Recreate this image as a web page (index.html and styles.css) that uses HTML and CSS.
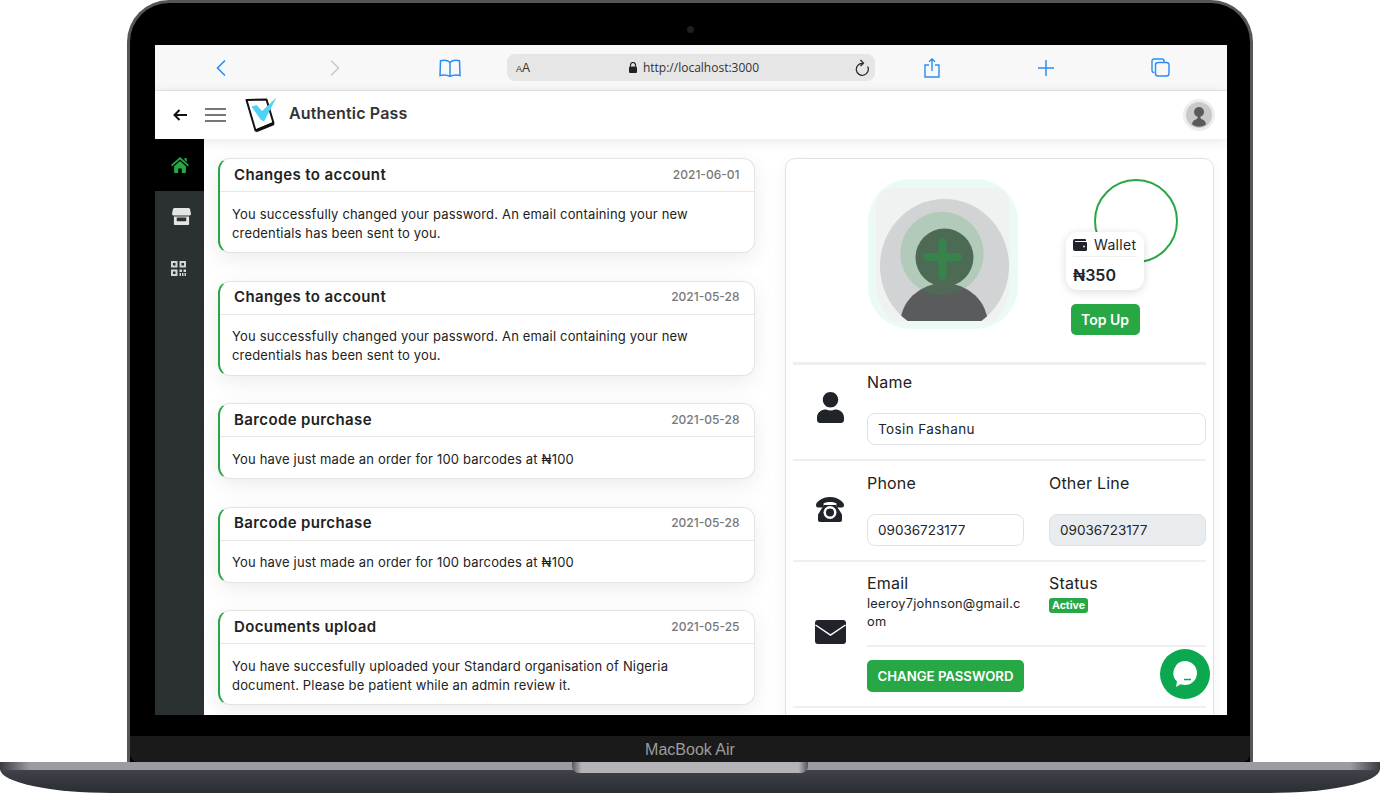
FILE: index.html
```html
<!DOCTYPE html>
<html lang="en">
<head>
    <meta charset="UTF-8">
    <meta name="viewport" content="width=device-width, initial-scale=1.0">
    <title>Authentic Pass</title>
    <link rel="stylesheet" href="styles.css">
</head>
<body>
    <div class="laptop">
        <div class="lid">
            <div class="bezel-top"><span class="camera"></span></div>
            <div class="screen">
                <!-- browser bar -->
                <div class="browser-bar">
                    <div class="bar-slot">
                        <svg width="12" height="18" viewBox="0 0 12 18" fill="none" stroke="#2b8cf6" stroke-width="1.6"><path d="M10 1.5 2.5 9l7.5 7.5"/></svg>
                    </div>
                    <div class="bar-slot">
                        <svg width="12" height="18" viewBox="0 0 12 18" fill="none" stroke="#c9c9c9" stroke-width="1.6"><path d="M2 1.5 9.5 9 2 16.500"/></svg>
                    </div>
                    <div class="bar-slot">
                        <svg width="22" height="18" viewBox="0 0 22 18" fill="none" stroke="#2b8cf6" stroke-width="1.5"><path d="M11 3.500C9 1.500 5 1 1.500 1.800L1 16.500c3.500-.8 7.500-.5 10 1 2.500-1.500 6.500-1.800 10-1l-.5-14.700C17 1 13 1.500 11 3.500zm0 0v14"/></svg>
                    </div>
                    <div class="url-bar">
                        <span class="url-aa"><small>A</small>A</span>
                        <span class="url-text">
                            <svg width="8" height="11" viewBox="0 0 8 11"><path d="M1.500 4.500V3a2.500 2.500 0 0 1 5 0v1.500" fill="none" stroke="#222" stroke-width="1.200"/><rect y="4.500" width="8" height="6.500" rx="1" fill="#222"/></svg>
                            http://localhost:3000
                        </span>
                        <svg class="url-reload" width="14" height="18" viewBox="0 0 14 18" fill="none" stroke="#222" stroke-width="1.200"><path d="M7.500 4.300A6 6 0 1 0 12.600 7.500"/><path d="M5.500 1l3 3.200-3 2.800"/></svg>
                    </div>
                    <div class="bar-slot">
                        <svg width="16" height="20" viewBox="0 0 16 20" fill="none" stroke="#2b8cf6" stroke-width="1.400"><path d="M5 7H1v12h14V7h-4M8 13V1M5 3.800 8 1l3 2.800"/></svg>
                    </div>
                    <div class="bar-slot">
                        <svg width="16" height="16" viewBox="0 0 16 16" fill="none" stroke="#2b8cf6" stroke-width="1.500"><path d="M8 0v16M0 8h16"/></svg>
                    </div>
                    <div class="bar-slot">
                        <svg width="19" height="19" viewBox="0 0 19 19" fill="none" stroke="#2b8cf6" stroke-width="1.400"><path d="M3.500 14.500H3a2 2 0 0 1-2-2V3a2 2 0 0 1 2-2h8a2 2 0 0 1 2 2v1"/><rect x="4.500" y="4.500" width="13.500" height="13.500" rx="2.500"/></svg>
                    </div>
                </div>

                <!-- app header -->
                <header class="app-header">
                    <svg class="back-arrow" width="14" height="12" viewBox="0 0 14 12" fill="none" stroke="#111" stroke-width="2"><path d="M14 6H2M6.500 1 1.500 6l5 5"/></svg>
                    <span class="hamburger"><i></i><i></i><i></i></span>
                    <svg class="logo" width="33" height="36" viewBox="0 0 33 36"><path d="M1.500 3 21.500 2.500 28.500 26 10.500 33.500z" fill="#fff" stroke="#111" stroke-width="2" stroke-linejoin="round"/><path d="M11 33.800 28.800 26.500" stroke="#111" stroke-width="3"/><path d="M6.500 9.500 11.500 8 17 14 31.500 .5 19 24.500 15.500 22.500z" fill="#4fd2f6"/></svg>
                    <span class="app-title">Authentic Pass</span>
                    <span class="user-chip">
                        <svg width="26" height="26" viewBox="0 0 26 26"><circle cx="13" cy="13" r="13" fill="#c9c9c9"/><circle cx="13" cy="10" r="5" fill="#5a5a5a"/><path d="M12 14h2l1 3c3 .8 4.500 2 5 5.500a13 13 0 0 1-14 0c.5-3.500 2-4.700 5-5.500z" fill="#5a5a5a"/></svg>
                    </span>
                </header>

                <div class="app-body">
                    <nav class="side-nav">
                        <a class="nav-item active">
                            <svg width="18" height="16" viewBox="0 0 20 18" preserveAspectRatio="none" fill="#28a745"><path d="M10 0 20 9l-1.300 1.400L10 2.700 1.300 10.400 0 9z"/><path d="M15 1h2.500v4.500L15 3.300z"/><path d="M3.500 10.500 10 4.500l6.500 6V18H12v-5H8v5H3.500z"/></svg>
                        </a>
                        <a class="nav-item nav-store">
                            <svg width="19" height="17" viewBox="0 0 20 18" preserveAspectRatio="none" fill="#e4e4e4"><path d="M3 0h14a2 2 0 0 1 2 1.400L20 6a2 2 0 0 1-2 2H2a2 2 0 0 1-2-2l1-4.600A2 2 0 0 1 3 0z"/><path fill-rule="evenodd" d="M2 9h16v8a1 1 0 0 1-1 1H3a1 1 0 0 1-1-1zm3 1v4h10v-4z"/></svg>
                        </a>
                        <a class="nav-item nav-qr">
                            <svg width="15" height="15" viewBox="0 0 15 15" fill="#d4d4d4"><path fill-rule="evenodd" d="M0 0h6.500v6.500H0zm2 2v2.500h2.500V2zM8.500 0H15v6.500H8.500zm2 2v2.500H13V2zM0 8.500h6.500V15H0zm2 2V13h2.500v-2.500z"/><path d="M8.500 8.500H11V11H8.500zM12.500 8.500H15V11h-2.500zM8.500 12H10v3H8.500zM11 12h1.500v3H11zM13.500 12H15v3h-1.500z"/></svg>
                        </a>
                    </nav>

                    <main class="content">
                        <section class="feed">
                            <article class="note-card">
                                <div class="note-head"><h3>Changes to account</h3><time>2021-06-01</time></div>
                                <p>You successfully changed your password. An email containing your new credentials has been sent to you.</p>
                            </article>
                            <article class="note-card">
                                <div class="note-head"><h3>Changes to account</h3><time>2021-05-28</time></div>
                                <p>You successfully changed your password. An email containing your new credentials has been sent to you.</p>
                            </article>
                            <article class="note-card">
                                <div class="note-head"><h3>Barcode purchase</h3><time>2021-05-28</time></div>
                                <p>You have just made an order for 100 barcodes at ₦100</p>
                            </article>
                            <article class="note-card">
                                <div class="note-head"><h3>Barcode purchase</h3><time>2021-05-28</time></div>
                                <p>You have just made an order for 100 barcodes at ₦100</p>
                            </article>
                            <article class="note-card">
                                <div class="note-head"><h3>Documents upload</h3><time>2021-05-25</time></div>
                                <p>You have succesfully uploaded your Standard organisation of Nigeria document. Please be patient while an admin review it.</p>
                            </article>
                        </section>

                        <aside class="profile">
                            <div class="profile-top">
                                <svg class="avatar" width="150" height="150" viewBox="0 0 150 150">
                                    <clipPath id="avatar-clip"><path d="M39.700 142A64.500 67 0 1 1 113.300 142z"/></clipPath>
                                    <rect width="150" height="150" rx="42" fill="#ebfbf4"/>
                                    <path d="M8 26a17 17 0 0 1 17-17h100a17 17 0 0 1 17 17v82c0 12-8 24-14 34H22C16 132 8 120 8 108z" fill="#f0f2f1"/>
                                    <g clip-path="url(#avatar-clip)">
                                        <rect width="150" height="150" fill="#d1d3d5"/>
                                        <ellipse cx="76" cy="146" rx="44" ry="42" fill="#5a5b5d"/>
                                    </g>
                                    <circle cx="74" cy="74.500" r="41.700" fill="#28a745" fill-opacity=".19"/>
                                    <circle cx="76.500" cy="78.500" r="29" fill="#4d6a55"/>
                                    <path d="M74.500 63v34M59 78h31" stroke="#37834b" stroke-width="8" stroke-linecap="round"/>
                                </svg>
                                <div class="wallet-col">
                                    <span class="wallet-ring"></span>
                                    <div class="wallet-card">
                                        <div class="wallet-label">
                                            <svg width="14" height="12" viewBox="0 0 14 12"><path d="M2 0h10a1 1 0 0 1 1 1v1H2.500a.5.500 0 0 0 0 1H13a1 1 0 0 1 1 1v6.500a1.500 1.500 0 0 1-1.500 1.500H2a2 2 0 0 1-2-2V2a2 2 0 0 1 2-2z" fill="#20232a"/><circle cx="11" cy="7.500" r=".9" fill="#fff"/></svg>
                                            Wallet
                                        </div>
                                        <div class="wallet-amount">₦350</div>
                                    </div>
                                    <button class="btn btn-topup">Top Up</button>
                                </div>
                            </div>

                            <div class="profile-row row-name">
                                <div class="row-icon">
                                    <svg width="27" height="31" viewBox="0 0 448 512" preserveAspectRatio="none" fill="#20232a"><path d="M224 256c70.700 0 128-57.300 128-128S294.700 0 224 0 96 57.300 96 128s57.300 128 128 128zm89.600 32h-16.700c-22.200 10.200-46.900 16-72.900 16s-50.600-5.800-72.900-16h-16.700C60.200 288 0 348.200 0 422.400V464c0 26.500 21.500 48 48 48h352c26.500 0 48-21.500 48-48v-41.600c0-74.200-60.200-134.400-134.400-134.400z"/></svg>
                                </div>
                                <div class="row-fields">
                                    <label class="field-label">Name</label>
                                    <input class="field-input field-wide" type="text" value="Tosin Fashanu">
                                </div>
                            </div>

                            <div class="profile-row row-phone">
                                <div class="row-icon">
                                    <svg width="28" height="25" viewBox="0 0 28 25" fill="#20232a"><path d="M0 8c0-3 6-8 14-8s14 5 14 8c0 1.600-.6 2.500-2 2.500h-4c-1.200 0-1.600-.8-1.600-2V6.200C18.500 5.300 16 5 14 5s-4.500.3-6.400 1.200v2.300c0 1.200-.4 2-1.600 2H2c-1.400 0-2-.9-2-2.500z"/><path d="M8 8h12l6 9.500V23a2 2 0 0 1-2 2H4a2 2 0 0 1-2-2v-5.500z"/><circle cx="14" cy="15.500" r="6.500" fill="#fff"/><circle cx="14" cy="15.500" r="4" fill="#20232a"/></svg>
                                </div>
                                <div class="row-fields two-col">
                                    <div>
                                        <label class="field-label">Phone</label>
                                        <input class="field-input" type="text" value="09036723177">
                                    </div>
                                    <div>
                                        <label class="field-label">Other Line</label>
                                        <input class="field-input" type="text" value="09036723177" disabled>
                                    </div>
                                </div>
                            </div>

                            <div class="profile-row row-email">
                                <div class="row-icon">
                                    <svg width="31" height="24" viewBox="0 0 31 24"><rect width="31" height="24" rx="3" fill="#20232a"/><path d="M.5 5 15.500 15 30.500 5" fill="none" stroke="#fff" stroke-width="1.500"/></svg>
                                </div>
                                <div class="row-fields">
                                    <div class="two-col email-top">
                                        <div>
                                            <div class="field-label">Email</div>
                                            <div class="email-text">leeroy7johnson@gmail.com</div>
                                        </div>
                                        <div>
                                            <div class="field-label">Status</div>
                                            <span class="badge">Active</span>
                                        </div>
                                    </div>
                                    <button class="btn btn-password">CHANGE PASSWORD</button>
                                </div>
                            </div>
                        </aside>
                    </main>
                </div>

                <a class="chat-bubble">
                    <svg width="26" height="28" viewBox="0 0 26 28"><path d="M13 1a12 12 0 0 1 0 24c-1.500 0-3-.3-4.300-.8L4 27l1-5.500A12 12 0 0 1 13 1z" fill="#fff"/><path d="M12 19.500h7" stroke="#0ba84f" stroke-width="1.500"/></svg>
                </a>
            </div>
            <div class="bezel-bottom"></div>
            <div class="chin">MacBook Air</div>
        </div>
        <div class="base"><span class="base-notch"></span></div>
    </div>
</body>
</html>
```

FILE: styles.css
```css
* {
    box-sizing: border-box;
}
body {
    margin: 0;
    background-color: #fff;
    font-family: "Inter", "Liberation Sans", sans-serif;
    color: #212529;
    overflow: hidden;
}
.laptop {
    width: 1380px;
    height: 793px;
}

/* laptop frame */
.lid {
    display: flex;
    flex-direction: column;
    width: 1126px;
    height: 762px;
    margin-left: 127px;
    border: 3px solid #55565a;
    border-bottom: 0;
    border-radius: 42px 42px 0 0;
    background-color: #000;
}
.bezel-top {
    display: flex;
    justify-content: center;
    align-items: center;
    height: 42px;
    padding-top: 10px;
}
.camera {
    width: 7px;
    height: 7px;
    border-radius: 50%;
    background-color: #1d1f22;
}
.bezel-bottom {
    height: 21px;
}
.chin {
    height: 26px;
    border-radius: 0 0 8px 8px;
    background-color: #1a1a1a;
    color: #9c9c9c;
    font-family: "Liberation Sans", sans-serif;
    font-size: 16px;
    line-height: 27px;
    text-align: center;
}
.base {
    display: flex;
    justify-content: center;
    height: 31px;
    border-radius: 0 0 112px 112px / 0 0 24px 24px;
    background:
        linear-gradient(90deg, #3a3b40 0, #9b9ba1 30px, #9b9ba1 calc(100% - 30px), #3a3b40 100%) top / 100% 8px no-repeat,
        linear-gradient(#55565c, #3f414a 30%, #2b2d34);
}
.base-notch {
    width: 236px;
    height: 11px;
    border-radius: 0 0 7px 7px;
    background: linear-gradient(90deg, #55565b, #b3b3b8 4%, #b3b3b8 96%, #55565b);
}

/* screen */
.screen {
    position: relative;
    display: flex;
    flex-direction: column;
    width: 1072px;
    height: 670px;
    margin-left: 25px;
    background-color: #fff;
    overflow: hidden;
}
.browser-bar {
    display: flex;
    align-items: center;
    flex: none;
    height: 46px;
    padding: 0 9px;
    border-bottom: 1px solid #e4e4e4;
    background-color: #f8f8f8;
}
.bar-slot {
    display: flex;
    justify-content: center;
    align-items: center;
    flex: 1;
}
.url-bar {
    position: relative;
    display: flex;
    justify-content: center;
    align-items: center;
    flex: none;
    width: 368px;
    height: 27px;
    border-radius: 8px;
    background-color: #e6e6e6;
}
.url-aa {
    position: absolute;
    left: 9px;
    font-family: "Liberation Sans", sans-serif;
    font-size: 12px;
    color: #333;
}
.url-aa small {
    font-size: 9px;
}
.url-text {
    display: flex;
    align-items: center;
    gap: 6px;
    margin-left: 6px;
    font-family: "Open Sans", sans-serif;
    font-size: 12px;
    color: #333;
}
.url-reload {
    position: absolute;
    right: 6px;
}

/* app header */
.app-header {
    position: relative;
    z-index: 2;
    display: flex;
    align-items: center;
    flex: none;
    height: 48px;
    padding: 0 12px 0 18px;
    background-color: #fff;
    box-shadow: 0 2px 12px rgba(0, 0, 0, 0.1);
}
.hamburger {
    display: flex;
    flex-direction: column;
    gap: 4px;
    width: 21px;
    margin-left: 18px;
}
.hamburger i {
    height: 2px;
    background-color: #777;
}
.logo {
    margin-left: 19px;
}
.app-title {
    margin-left: 11px;
    padding-bottom: 4px;
    font-size: 16px;
    font-weight: 600;
    letter-spacing: 0.15px;
    color: #333;
}
.user-chip {
    display: flex;
    justify-content: center;
    align-items: center;
    width: 32px;
    height: 32px;
    margin-left: auto;
    border-radius: 50%;
    background-color: #eee;
}

/* body */
.app-body {
    display: flex;
    flex: 1;
    min-height: 0;
}
.side-nav {
    flex: none;
    width: 49px;
    background-color: #2b3033;
}
.nav-item {
    display: flex;
    justify-content: center;
    align-items: center;
    height: 52px;
}
.nav-item.active {
    padding-bottom: 1px;
    background-color: #000;
}
.nav-store {
    padding: 0 0 1px 3px;
}
.nav-qr {
    padding: 0 3px 2px 0;
}
.content {
    display: flex;
    flex: 1;
    gap: 30px;
    padding: 19px 13px 0 14px;
    background-color: #fff;
}

/* notification cards */
.feed {
    display: flex;
    flex-direction: column;
    flex: none;
    gap: 27.5px;
    width: 537px;
}
.note-card {
    flex: none;
    border: 1px solid #e3e3e3;
    border-left: 2px solid #28a745;
    border-radius: 12px;
    background-color: #fff;
    box-shadow: 0 6px 22px rgba(0, 0, 0, 0.08);
}
.note-head {
    display: flex;
    justify-content: space-between;
    align-items: center;
    height: 33px;
    padding: 0 14.5px 2px 14px;
    border-bottom: 1px solid #e8e8e8;
}
.note-head h3 {
    margin: 0;
    font-size: 15px;
    font-weight: 600;
    letter-spacing: 0.38px;
    color: #222;
}
.note-head time {
    font-size: 12px;
    font-weight: 500;
    color: #777;
}
.note-card p {
    margin: 0;
    padding: 12.5px 22px 9.5px 12px;
    font-size: 13px;
    line-height: 19px;
    letter-spacing: 0.17px;
    color: #222;
}

/* profile panel */
.profile {
    flex: none;
    width: 429px;
    height: 640px;
    padding: 0 7px;
    border: 1px solid #e2e2e2;
    border-radius: 10px;
    background-color: #fff;
    box-shadow: 0 4px 16px rgba(0, 0, 0, 0.05);
}
.profile-top {
    display: flex;
    height: 206px;
    padding: 20px 0 0 75px;
    border-bottom: 3px solid #eee;
}
.wallet-col {
    position: relative;
    display: flex;
    flex-direction: column;
    align-items: center;
    width: 78px;
    margin-left: 48px;
    padding-top: 53px;
}
.wallet-ring {
    position: absolute;
    top: 0;
    left: 28px;
    width: 84px;
    height: 84px;
    border: 2px solid #28a745;
    border-radius: 50%;
}
.wallet-card {
    position: relative;
    width: 78px;
    height: 58px;
    padding: 3px 7px;
    border-radius: 12px;
    background-color: #fff;
    box-shadow: 0 2px 10px rgba(0, 0, 0, 0.14);
}
.wallet-label {
    display: flex;
    align-items: center;
    gap: 7px;
    height: 22px;
    padding-bottom: 2px;
    border-bottom: 1px solid #eee;
    font-size: 14px;
    line-height: 14px;
    letter-spacing: 0.3px;
}
.wallet-amount {
    margin-top: 8px;
    font-size: 16px;
    font-weight: 600;
}
.btn {
    border: 0;
    border-radius: 5px;
    background-color: #28a745;
    color: #fff;
    font-family: inherit;
    font-weight: 600;
}
.btn-topup {
    flex: none;
    width: 69px;
    height: 31px;
    margin-top: 14px;
    font-size: 14px;
}
.profile-row {
    display: flex;
    border-bottom: 2px solid #f1eeee;
}
.row-icon {
    display: flex;
    justify-content: center;
    align-items: center;
    flex: none;
    width: 74px;
}
.row-fields {
    flex: 1;
    min-width: 0;
}
.two-col {
    display: grid;
    grid-template-columns: 157px 157px;
    column-gap: 25px;
}
.row-name {
    height: 96px;
    padding-top: 5px;
}
.row-name .row-icon {
    padding-bottom: 14px;
}
.row-phone {
    height: 101px;
    padding-top: 10px;
}
.row-phone .row-icon {
    padding-bottom: 12px;
}
.row-email {
    height: 146px;
    padding-top: 9px;
}
.row-email .row-icon {
    padding-bottom: 14px;
}
.field-label {
    display: block;
    font-size: 16px;
    line-height: 24px;
    letter-spacing: 0.2px;
    color: #222;
}
.field-input {
    display: block;
    width: 100%;
    height: 32px;
    margin-top: 19px;
    padding: 0 10px;
    border: 1px solid #dfe1e5;
    border-radius: 8px;
    background-color: #fff;
    font-family: inherit;
    font-size: 13.500px;
    color: #212529;
}
.field-wide {
    letter-spacing: 0.4px;
}
.field-input:disabled {
    background-color: #e9ecef;
    opacity: 1;
}
.email-top {
    height: 76px;
    border-bottom: 2px solid #f1eeee;
}
.email-text {
    font-size: 12.800px;
    line-height: 18px;
    letter-spacing: 0.25px;
    word-break: break-all;
}
.badge {
    display: block;
    width: 39px;
    height: 15px;
    margin-top: 3px;
    border-radius: 3px;
    background-color: #28a745;
    color: #fff;
    font-size: 10.500px;
    font-weight: 700;
    line-height: 15px;
    text-align: center;
}
.btn-password {
    display: block;
    width: 157px;
    height: 32px;
    margin-top: 13px;
    font-size: 13.200px;
}

/* chat launcher */
.chat-bubble {
    position: absolute;
    right: 17px;
    bottom: 16px;
    z-index: 3;
    display: flex;
    justify-content: center;
    align-items: center;
    width: 50px;
    height: 50px;
    border-radius: 50%;
    background-color: #0ba84f;
}
```
